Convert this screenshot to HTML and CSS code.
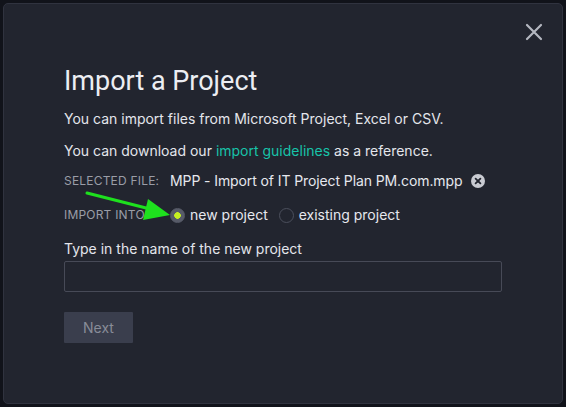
FILE: index.html
```html
<!DOCTYPE html>
<html>
<head>
<meta charset="utf-8">
<link rel="stylesheet" href="styles.css">
</head>
<body>
<div class="modal">
  <button class="close" aria-label="Close">
    <svg width="18" height="18" viewBox="0 0 18 18"><path d="M2 2L16 16M16 2L2 16" stroke="#b4b7c0" stroke-width="2.2" stroke-linecap="round"/></svg>
  </button>
  <h1 class="title">Import a Project</h1>
  <p class="text">You can import files from Microsoft Project, Excel or CSV.</p>
  <p class="text">You can download our <a class="link" href="#">import guidelines</a> as a reference.</p>
  <div class="row file-row">
    <span class="label">SELECTED FILE:</span>
    <span class="value">MPP - Import of IT Project Plan PM.com.mpp</span>
    <svg class="remove" width="14" height="14" viewBox="0 0 14 14"><circle cx="7" cy="7" r="7" fill="#c9cbd2"/><path d="M4.6 4.6L9.4 9.4M9.4 4.6L4.6 9.4" stroke="#22252f" stroke-width="1.8" stroke-linecap="round"/></svg>
  </div>
  <div class="row into-row">
    <span class="label">IMPORT INTO:</span>
    <label class="radio checked"><span class="dot"></span>new project</label>
    <label class="radio"><span class="dot"></span>existing project</label>
  </div>
  <div class="field-label">Type in the name of the new project</div>
  <div class="input"></div>
  <button class="next">Next</button>
  <svg class="arrow" width="100" height="32" viewBox="0 0 100 32"><path d="M3 2L70 19" stroke="#1ee01e" stroke-width="3" stroke-linecap="round"/><path d="M86 24L64 8L59 29Z" fill="#1ee01e"/></svg>
</div>
</body>
</html>
```
FILE: styles.css
```css
html, body {
  margin: 0;
  padding: 0;
}
body {
  width: 566px;
  height: 407px;
  background: #11131a;
  font-family: Inter, "Noto Sans", sans-serif;
  color: #e4e6ec;
  padding: 3px;
  box-sizing: border-box;
  overflow: hidden;
}
.modal {
  position: relative;
  box-sizing: border-box;
  width: 560px;
  height: 401px;
  background: #22252f;
  border: 1px solid #30333f;
  border-radius: 5px;
  padding: 60px 0 0 60px;
}
.close {
  position: absolute;
  right: 19px;
  top: 19px;
  background: none;
  border: none;
  padding: 0;
  width: 18px;
  height: 18px;
}
.close svg { display: block; }
.title {
  margin: 0;
  font-family: Roboto, Inter, sans-serif;
  font-weight: 400;
  font-size: 27px;
  line-height: 34px;
  color: #eceef3;
}
.text {
  margin: 12px 0 0;
  font-size: 14px;
  line-height: 18px;
}
.text + .text { margin-top: 14px; }
.link { color: #17c3a9; text-decoration: none; }
.row {
  display: flex;
  align-items: center;
  font-size: 14px;
  line-height: 18px;
}
.file-row { margin-top: 12px; }
.into-row { margin-top: 16px; }
.label {
  font-size: 12px;
  color: #9a9da7;
  letter-spacing: 0.2px;
  width: 106px;
  flex: none;
}
.value { color: #e6e8ee; letter-spacing: -0.1px; }
.remove { margin-left: 9px; }
.radio {
  display: flex;
  align-items: center;
  gap: 5px;
  color: #e6e8ee;
  margin-right: 11px;
}
.dot {
  box-sizing: border-box;
  width: 15px;
  height: 15px;
  border-radius: 50%;
  border: 1px solid #4b4f5c;
}
.radio.checked .dot {
  background: radial-gradient(circle, #c6f021 0 3px, #575b68 3.6px);
  border-color: #575b68;
}
.field-label {
  margin-top: 16px;
  font-size: 14px;
  line-height: 18px;
}
.input {
  margin-top: 3px;
  width: 438px;
  height: 31px;
  box-sizing: border-box;
  border: 1px solid #474a57;
  border-radius: 2px;
}
.next {
  display: block;
  margin-top: 20px;
  width: 69px;
  height: 31px;
  background: #3a3e4d;
  border: none;
  border-radius: 1px;
  color: #888c98;
  font-family: Inter, sans-serif;
  font-size: 14px;
}
.arrow {
  position: absolute;
  left: 80px;
  top: 187px;
}
```
